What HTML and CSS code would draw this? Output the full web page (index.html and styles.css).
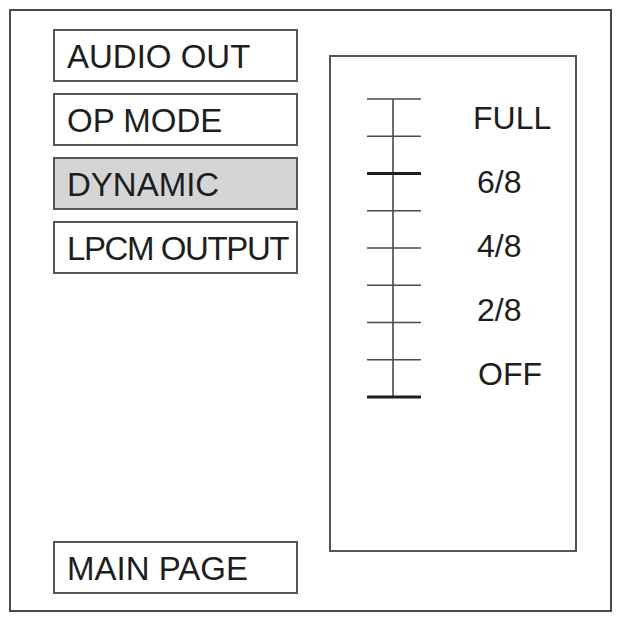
FILE: index.html
```html
<!DOCTYPE html>
<html lang="en">
<head>
    <meta charset="UTF-8">
    <meta name="viewport" content="width=device-width, initial-scale=1.0">
    <title>Dynamic Range</title>
    <link rel="stylesheet" href="styles.css">
</head>
<body>
    <div class="screen">
        <div class="menu">
            <div class="menu-item">AUDIO OUT</div>
            <div class="menu-item">OP MODE</div>
            <div class="menu-item active">DYNAMIC</div>
            <div class="menu-item tight">LPCM OUTPUT</div>
            <div class="menu-item main-page">MAIN PAGE</div>
        </div>
        <div class="panel">
            <!-- level scale, thick marks = current value and bottom -->
            <svg class="scale" width="54" height="302" viewBox="0 0 54 302">
                <g stroke="#4a4a4a" stroke-width="1.6">
                    <line x1="26" y1="2" x2="26" y2="300"/>
                    <line x1="0" y1="2" x2="54" y2="2"/>
                    <line x1="0" y1="39.25" x2="54" y2="39.25"/>
                    <line x1="0" y1="76.5" x2="54" y2="76.5" stroke="#1e1e1e" stroke-width="3"/>
                    <line x1="0" y1="113.75" x2="54" y2="113.75"/>
                    <line x1="0" y1="151" x2="54" y2="151"/>
                    <line x1="0" y1="188.25" x2="54" y2="188.25"/>
                    <line x1="0" y1="225.5" x2="54" y2="225.5"/>
                    <line x1="0" y1="262.75" x2="54" y2="262.75"/>
                    <line x1="0" y1="300" x2="54" y2="300" stroke="#1e1e1e" stroke-width="3"/>
                </g>
            </svg>
            <div class="levels">
                <div class="level full">FULL</div>
                <div class="level">6/8</div>
                <div class="level">4/8</div>
                <div class="level">2/8</div>
                <div class="level off">OFF</div>
            </div>
        </div>
    </div>
</body>
</html>
```

FILE: styles.css
```css
body {
    margin: 0;
    padding: 0;
    background-color: #fff;
    font-family: "Liberation Sans", Arial, sans-serif;
    color: #1e1e1e;
}
.screen {
    margin: 9px;
    width: 603px;
    height: 603px;
    box-sizing: border-box;
    border: 2px solid #4a4a4a;
    display: flex;
    gap: 31px;
    padding: 18px 0 16px 42px;
}
.menu {
    display: flex;
    flex-direction: column;
    gap: 11px;
}
.menu-item {
    width: 245px;
    height: 53px;
    box-sizing: border-box;
    border: 2px solid #555;
    padding: 3px 0 0 12px;
    font-size: 33px;
    line-height: 46px;
    background-color: #fff;
    white-space: nowrap;
}
.menu-item.active {
    background-color: #d5d5d5;
}
.menu-item.tight {
    letter-spacing: -1.4px;
}
.main-page {
    margin-top: auto;
}
.panel {
    width: 248px;
    height: 497px;
    margin-top: 26px;
    box-sizing: border-box;
    border: 2px solid #555;
    display: flex;
    align-items: flex-start;
}
.scale {
    display: block;
    margin: 40px 0 0 36px;
}
.levels {
    margin: 29px 0 0 56px;
}
.level {
    font-size: 32px;
    line-height: 64px;
    height: 64px;
}
.level.full {
    margin-left: -4px;
}
.level.off {
    margin-left: 1px;
}
```
